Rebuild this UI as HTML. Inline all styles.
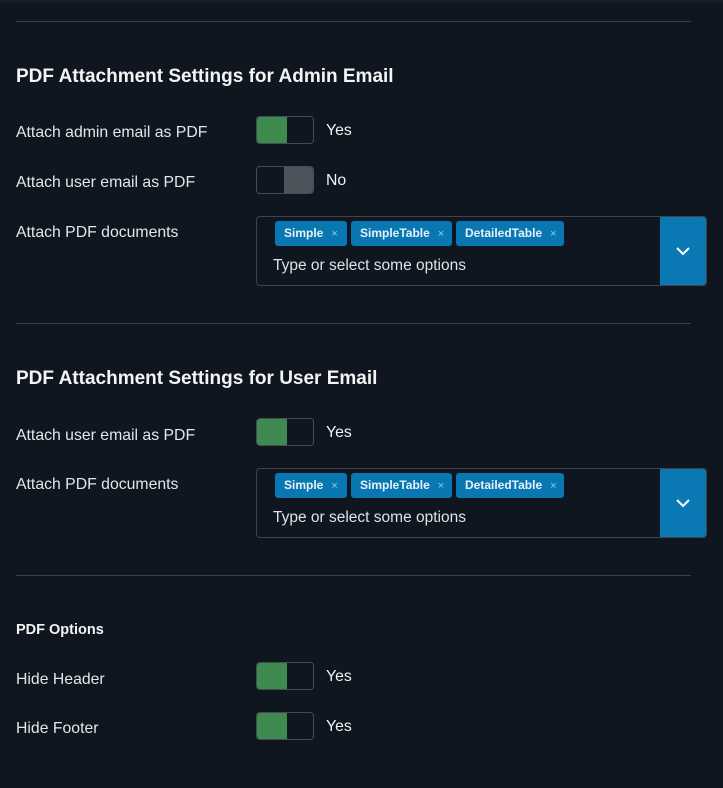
<!DOCTYPE html>
<html><head><style>
*{margin:0;padding:0;box-sizing:border-box}
body{width:723px;height:788px;background:#10161f;font-family:"Liberation Sans",sans-serif;color:#e8eaed;position:relative;overflow:hidden}
.a{position:absolute;white-space:nowrap}
.top{position:absolute;left:0;top:0;width:723px;height:3px;background:#171e27}
.hr{position:absolute;left:16px;width:675px;height:1px;background:#3a4049}
h2{position:absolute;left:16px;font-size:19px;font-weight:bold;color:#f2f4f6;white-space:nowrap}
.lbl{position:absolute;left:16px;font-size:15.8px;color:#e3e6ea;white-space:nowrap}
.tg{position:absolute;left:256px;width:58px;height:28px;border:1px solid #454b54;border-radius:4px;overflow:hidden}
.tg .on{position:absolute;left:0;top:0;width:30px;height:100%;background:#3e8a4f}
.tg .off{position:absolute;right:0;top:0;width:29px;height:100%;background:#4d535b}
.tv{position:absolute;left:326px;font-size:15.8px;color:#f0f2f4}
.ms{position:absolute;left:256px;width:451px;height:70px;border:1px solid #3e444d;border-radius:4px;overflow:hidden}
.btn{position:absolute;right:0;top:0;width:46px;height:100%;background:#0a78b3}
.btn svg{position:absolute;left:15px;top:29px}
.tag{position:absolute;top:4px;height:25px;background:#0877b2;border-radius:3px;font-size:12px;font-weight:bold;color:#e8f2f9;line-height:25px;padding-left:9px}
.tag i{font-style:normal;font-weight:normal;color:#9cc8e2;margin-left:8px;font-size:11px}
.ph{position:absolute;left:16px;top:40px;font-size:15.5px;color:#dfe2e6;white-space:nowrap}
</style></head><body>
<div class="top"></div>
<div class="hr" style="top:21px"></div>
<h2 style="top:66px">PDF Attachment Settings for Admin Email</h2>
<div class="lbl" style="top:124px">Attach admin email as PDF</div>
<div class="tg" style="top:116px"><div class="on"></div></div><div class="tv" style="top:122px">Yes</div>
<div class="lbl" style="top:174px">Attach user email as PDF</div>
<div class="tg" style="top:166px"><div class="off"></div></div><div class="tv" style="top:172px">No</div>
<div class="lbl" style="top:224px">Attach PDF documents</div>
<div class="ms" style="top:216px">
<div class="tag" style="left:18px;width:72px">Simple<i>×</i></div>
<div class="tag" style="left:94px;width:101px">SimpleTable<i>×</i></div>
<div class="tag" style="left:199px;width:108px">DetailedTable<i>×</i></div>
<div class="ph">Type or select some options</div>
<div class="btn"><svg width="16" height="10" viewBox="0 0 16 10"><path d="M2 2l6 6 6-6" stroke="#fff" stroke-width="2" fill="none"/></svg></div>
</div>
<div class="hr" style="top:323px"></div>
<h2 style="top:368px">PDF Attachment Settings for User Email</h2>
<div class="lbl" style="top:427px">Attach user email as PDF</div>
<div class="tg" style="top:418px"><div class="on"></div></div><div class="tv" style="top:424px">Yes</div>
<div class="lbl" style="top:476px">Attach PDF documents</div>
<div class="ms" style="top:468px">
<div class="tag" style="left:18px;width:72px">Simple<i>×</i></div>
<div class="tag" style="left:94px;width:101px">SimpleTable<i>×</i></div>
<div class="tag" style="left:199px;width:108px">DetailedTable<i>×</i></div>
<div class="ph">Type or select some options</div>
<div class="btn"><svg width="16" height="10" viewBox="0 0 16 10"><path d="M2 2l6 6 6-6" stroke="#fff" stroke-width="2" fill="none"/></svg></div>
</div>
<div class="hr" style="top:575px"></div>
<div class="a" style="left:16px;top:622px;font-size:14.5px;font-weight:bold;color:#f2f4f6">PDF Options</div>
<div class="lbl" style="top:671px">Hide Header</div>
<div class="tg" style="top:662px"><div class="on"></div></div><div class="tv" style="top:668px">Yes</div>
<div class="lbl" style="top:720px">Hide Footer</div>
<div class="tg" style="top:712px"><div class="on"></div></div><div class="tv" style="top:718px">Yes</div>
</body></html>
